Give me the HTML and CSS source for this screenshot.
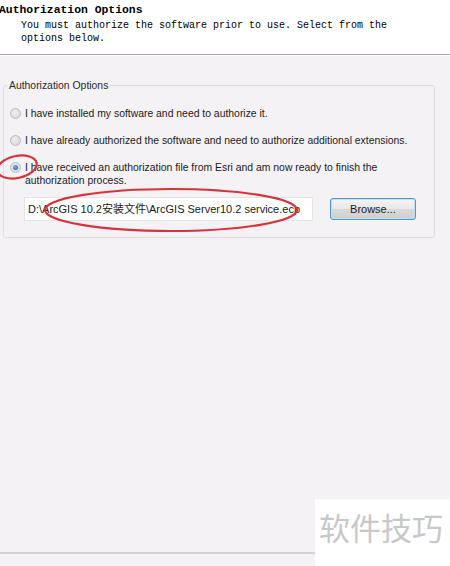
FILE: index.html
```html
<!DOCTYPE html>
<html>
<head>
<meta charset="utf-8">
<link rel="stylesheet" href="styles.css">
</head>
<body>
<div class="page">
  <div class="header">
    <div class="title">Authorization Options</div>
    <div class="subtitle">You must authorize the software prior to use. Select from the<br>options below.</div>
  </div>
  <div class="main">
    <fieldset class="group">
      <legend class="legend">Authorization Options</legend>
      <div class="option">
        <span class="radio"></span>
        <span class="label">I have installed my software and need to authorize it.</span>
      </div>
      <div class="option">
        <span class="radio"></span>
        <span class="label">I have already authorized the software and need to authorize additional extensions.</span>
      </div>
      <div class="option option-multi">
        <span class="radio radio-on"></span>
        <span class="label">I have received an authorization file from Esri and am now ready to finish the authorization process.</span>
      </div>
      <div class="file-row">
        <div class="file-input">D:\ArcGIS 10.2安装文件\ArcGIS Server10.2 service.ecp</div>
        <div class="button">Browse...</div>
      </div>
    </fieldset>
  </div>
  <div class="footer"></div>
</div>
<svg class="marks" width="450" height="566" viewBox="0 0 450 566">
  <ellipse cx="17" cy="167" rx="20" ry="11" fill="none" stroke="#d8323a" stroke-width="2.2" transform="rotate(-12 17 167)"/>
  <ellipse cx="171" cy="210" rx="126" ry="21" fill="none" stroke="#d8323a" stroke-width="2.2"/>
</svg>
<div class="watermark">软件技巧</div>
</body>
</html>
```
FILE: styles.css
```css
html, body {
  margin: 0;
  padding: 0;
}
body {
  width: 450px;
  height: 566px;
  overflow: hidden;
  background: #f5f2f5;
  font-family: "Liberation Sans", Arial, "Noto Sans CJK SC", sans-serif;
  position: relative;
}
.page {
  display: flex;
  flex-direction: column;
  height: 566px;
}
.header {
  background: #ffffff;
  height: 55px;
  border-bottom: 1px solid #a7a5a7;
  box-shadow: 0 1px 0 #ffffff;
  padding-top: 4px;
  box-sizing: border-box;
}
.title {
  font-family: "Liberation Mono", "Courier New", monospace;
  font-weight: bold;
  font-size: 11.4px;
  line-height: 13px;
  color: #000;
  margin-left: -1px;
}
.subtitle {
  font-family: "Liberation Mono", "Courier New", monospace;
  font-size: 10px;
  line-height: 13px;
  color: #000;
  margin-left: 21px;
  margin-top: 2px;
}
.main {
  flex: 1;
  padding: 25px 15px 0 3px;
}
.group {
  margin: 0;
  border: 1px solid #dcdde0;
  border-radius: 3px;
  padding: 4px 0 10px 0;
  height: 158px;
  box-sizing: border-box;
}
.legend {
  font-size: 10.4px;
  color: #2a2a2a;
  padding: 0 2px;
  margin-left: 3px;
}
.option {
  display: flex;
  align-items: flex-start;
  gap: 4px;
  padding-left: 6px;
  font-size: 10.4px;
  line-height: 13px;
  color: #1a1a1a;
  margin-top: 13px;
  height: 14px;
}
.option:first-of-type {
  margin-top: 12px;
}
.option-multi {
  height: 27px;
  padding-right: 30px;
}
.radio {
  flex: none;
  width: 11px;
  height: 11px;
  border-radius: 50%;
  border: 1px solid #b9bcbf;
  background: radial-gradient(circle at 40% 40%, #f0f0f0, #d4d4d6);
  box-sizing: border-box;
  margin-top: 1px;
  position: relative;
}
.radio-on::after {
  content: "";
  position: absolute;
  left: 2px;
  top: 2px;
  width: 5px;
  height: 5px;
  border-radius: 50%;
  background: radial-gradient(circle at 40% 35%, #6fb2e6, #1f5e98);
}
.file-row {
  display: flex;
  align-items: center;
  margin-top: 9px;
  padding-left: 20px;
}
.file-input {
  width: 289px;
  height: 24px;
  box-sizing: border-box;
  background: #ffffff;
  border: 1px solid #e4e4e6;
  font-size: 11px;
  line-height: 22px;
  padding-left: 3px;
  color: #1a1a1a;
  white-space: nowrap;
  overflow: hidden;
}
.button {
  margin-left: 17px;
  width: 86px;
  height: 22px;
  box-sizing: border-box;
  border: 1px solid #4a98c6;
  border-radius: 3px;
  background: linear-gradient(#f4f4f4 0%, #e8e8e8 50%, #d9d9d9 51%, #cfcfcf 100%);
  box-shadow: inset 0 0 0 1px #bfe3f6;
  font-size: 11px;
  line-height: 20px;
  text-align: center;
  color: #1a1a1a;
}
.footer {
  height: 14px;
  border-top: 2px solid #d4d0d4;
  box-sizing: border-box;
}
.marks {
  position: absolute;
  left: 0;
  top: 0;
  pointer-events: none;
}
.watermark {
  position: absolute;
  left: 315px;
  top: 499px;
  width: 135px;
  height: 67px;
  background: #ffffff;
  font-family: "Noto Sans CJK SC", sans-serif;
  font-size: 31px;
  color: #c8c8c8;
  line-height: 50px;
  padding-left: 4px;
  padding-top: 3px;
  box-sizing: border-box;
}
```
